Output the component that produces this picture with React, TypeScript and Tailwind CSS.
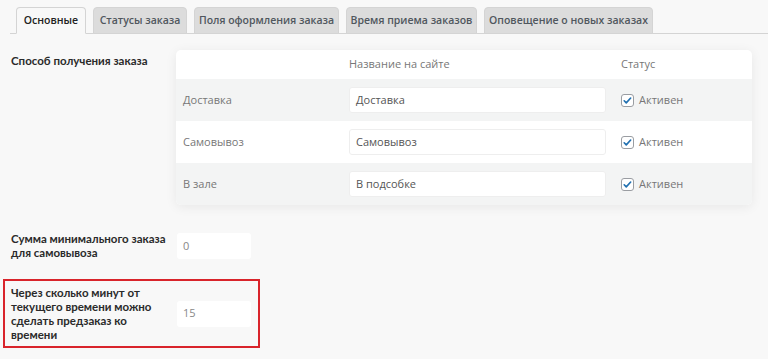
const tabs = [
  { t: 'Основные', w: 'w-[70px]' },
  { t: 'Статусы заказа', w: 'w-[94px]' },
  { t: 'Поля оформления заказа', w: 'w-[145px]' },
  { t: 'Время приема заказов', w: 'w-[131px]' },
  { t: 'Оповещение о новых заказах', w: 'w-[169px]' },
]

const methods = [
  { label: 'Доставка', value: 'Доставка' },
  { label: 'Самовывоз', value: 'Самовывоз' },
  { label: 'В зале', value: 'В подсобке' },
]

const labelCls = 'whitespace-nowrap font-["Lato","Open_Sans",sans-serif] text-[11.5px] font-bold leading-[14px] text-[#2a2a2a]'

function Check() {
  return (
    <span className="flex h-[13px] w-[13px] items-center justify-center rounded-[3px] border border-[#9a9da2] bg-white">
      <svg viewBox="0 0 16 16" className="h-[11px] w-[11px]">
        <path d="M3.2 8.4l3 3 6.4-7" fill="none" stroke="#2271b1" strokeWidth={2.4} strokeLinecap="round" strokeLinejoin="round" />
      </svg>
    </span>
  )
}

export default function App() {
  return (
    <div
      className="h-[359px] w-[768px] overflow-hidden bg-[#f8f8f8] text-[11px] text-[#333]"
      style={{ fontFamily: '"Open Sans", "Liberation Sans", sans-serif' }}
    >
      {/* tabs */}
      <div className="ml-[10px] flex items-end gap-[7px] border-b border-[#d4d4d4] pl-[6px] pt-[7px]">
        {tabs.map((tab, i) => (
          <div
            key={tab.t}
            className={[
              '-mb-px flex h-[27px] items-center justify-center whitespace-nowrap rounded-t-[4px] border border-[#d4d4d4] text-[10.5px] font-semibold',
              tab.w,
              i === 0 ? 'border-b-[#f8f8f8] bg-[#f8f8f8] text-[#222]' : 'bg-[#dcdcdc] text-[#50575e]',
            ].join(' ')}
          >
            {tab.t}
          </div>
        ))}
      </div>

      <div className="pl-[11px] pt-[16px]">
        <div className="flex">
          <div className={'w-[165px] pt-[4px] ' + labelCls}>Способ получения заказа</div>
          <div className="w-[576px] overflow-hidden rounded-[5px] bg-white text-[#777] shadow-[0_2px_12px_rgba(0,0,0,0.07)]">
            <div className="grid h-[29px] grid-cols-[173px_272px_1fr] items-center">
              <div />
              <div>Название на сайте</div>
              <div>Статус</div>
            </div>
            {methods.map((m, i) => (
              <div
                key={m.label}
                className={[
                  'grid h-[42px] grid-cols-[173px_272px_1fr] items-center',
                  i % 2 === 0 ? 'bg-[#f3f4f4]' : 'bg-white',
                ].join(' ')}
              >
                <div className="pl-[7px]">{m.label}</div>
                <div className="flex h-[26px] w-[257px] items-center rounded-[3px] border border-[#eeeeee] bg-white px-[6px] text-[#555]">
                  {m.value}
                </div>
                <div className="flex items-center gap-[5px]">
                  <Check />
                  <span>Активен</span>
                </div>
              </div>
            ))}
          </div>
        </div>

        <div className="mt-[27px] flex items-center">
          <div className={'w-[166px] ' + labelCls}>
            Сумма минимального заказа
            <br />
            для самовывоза
          </div>
          <div className="flex h-[26px] w-[74px] items-center rounded-[3px] bg-white px-[6px] text-[#888]">0</div>
        </div>

        <div className="-ml-[8px] mt-[19px] flex h-[69px] w-[257px] items-center border-2 border-[#d9242b] pl-[6px]">
          <div className={'w-[166px] ' + labelCls}>
            Через сколько минут от
            <br />
            текущего времени можно
            <br />
            сделать предзаказ ко
            <br />
            времени
          </div>
          <div className="flex h-[26px] w-[74px] items-center rounded-[3px] bg-white px-[6px] text-[#888]">15</div>
        </div>
      </div>
    </div>
  )
}
